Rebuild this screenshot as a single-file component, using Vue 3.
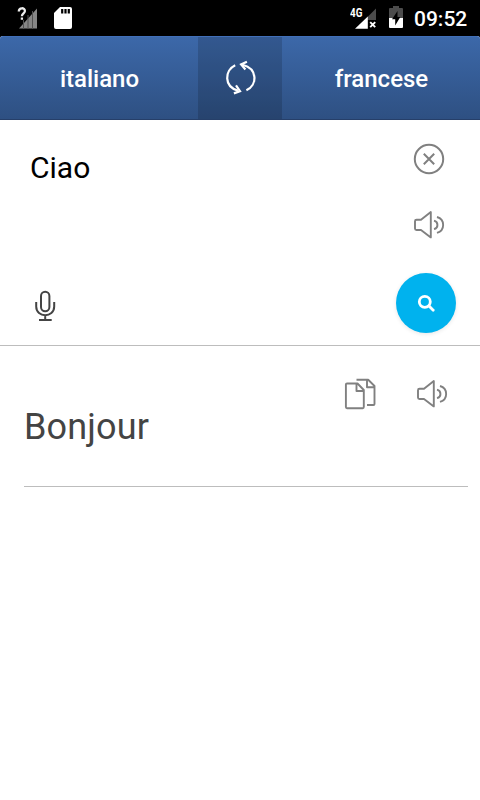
<script setup>
import { ref } from 'vue'

const source = ref('italiano')
const target = ref('francese')
const input = ref('Ciao')
const output = ref('Bonjour')

function swap() {
  const lang = source.value
  source.value = target.value
  target.value = lang
}
</script>

<template>
  <div class="screen">
    <header class="status">
      <svg class="signal" viewBox="17 6 22 24" width="22" height="24">
        <path d="M19 28.5L37 8.5V28.5Z" fill="#858585" />
        <path d="M23.5 20V29M28 15V29M32.5 11V29" stroke="#505050" stroke-width="1" />
        <path d="M18.5 10.8C18.8 7.2 25 7 25 10.8C25 13.3 21.9 13.4 21.9 16.4V20" fill="none" stroke="#000" stroke-width="4.6" />
        <path d="M18.8 11.4C18.8 7.4 24.9 7.2 24.9 11C24.9 13.3 21.9 13.4 21.9 16.2M21.9 17.4V19.8" fill="none" stroke="#ededed" stroke-width="2.3" />
      </svg>
      <svg class="sd" viewBox="54 7 18 22" width="18" height="22">
        <path d="M60 7H70Q72 7 72 9V27Q72 29 70 29H56Q54 29 54 27V13Z" fill="#fff" />
        <path d="M62.2 9V13.6M65.5 9V13.6M68.8 9V13.6" stroke="#000" stroke-width="2.2" />
      </svg>
      <span class="grow"></span>
      <span class="network">
        <svg viewBox="349 6 30 24" width="30" height="24">
          <path d="M367.5 17L376 8.5V20H367.5Z" fill="#4c4c4c" />
          <path d="M355 28.8L367.8 16.5V28.8Z" fill="#fff" />
          <path d="M370.2 22.2L375.2 27.2M375.2 22.2L370.2 27.2" stroke="#fff" stroke-width="1.9" />
        </svg>
        <span class="generation">4G</span>
      </span>
      <svg class="battery" viewBox="389 6 14 22" width="14" height="22">
        <path d="M389 9Q389 8 390 8H393V6H399V8H402Q403 8 403 9V18H389Z" fill="#4c4c4c" />
        <path d="M389 18H403V27Q403 28 402 28H390Q389 28 389 27Z" fill="#fff" />
        <path d="M397.5 11L392 19.3H395.2V25.5L400.3 17H397.5Z" fill="#000" />
      </svg>
      <time>09:52</time>
    </header>

    <nav class="languages">
      <button class="language">{{ source }}</button>
      <button class="swap" aria-label="Scambia" @click="swap">
        <svg viewBox="223 60 34 36" width="34" height="36">
          <g fill="none" stroke="#fff" stroke-width="2.2">
            <path d="M235.2 65.2C224.4 70.3 223.7 86.7 238 90.6" />
            <path d="M236 85.4L240 91.1L233.9 93.4" />
            <path d="M246.4 90.3C257.5 85.3 258 68.7 242.5 64.8" />
            <path d="M246.9 61.7L241.1 64.4L245.4 69.5" />
          </g>
        </svg>
      </button>
      <button class="language">{{ target }}</button>
    </nav>

    <main>
      <section class="source">
        <div class="entry">
          <p class="input">{{ input }}</p>
          <svg class="mic" viewBox="34 289 22 33" width="22" height="33">
            <g fill="none" stroke="#444" stroke-width="2">
              <rect x="41" y="291.7" width="8.4" height="19.6" rx="4.2" />
              <path d="M36.2 302V306.5C36.2 318 54.2 318 54.2 306.5V302M45.2 315V320M39 320H51.7" />
            </g>
          </svg>
        </div>
        <div class="actions">
          <svg class="clear" viewBox="413 143 32 32" width="32" height="32">
            <g fill="none" stroke="#808080" stroke-width="2">
              <circle cx="429" cy="159" r="14.2" />
              <path d="M423.8 153.8L434.2 164.2M434.2 153.8L423.8 164.2" />
            </g>
          </svg>
          <svg class="speaker" viewBox="413 210 32 30" width="32" height="30">
            <g fill="none" stroke="#808080" stroke-width="1.9" stroke-linejoin="round">
              <path d="M421 219.8L430.8 212V237.4L421 230H416.5Q415 230 415 228.5V221.3Q415 219.8 416.5 219.8Z" />
              <path d="M434 220.6C438.6 221.8 438.6 228 434 229.2M437 217C445.2 219.6 445.2 230.2 437 232.9" />
            </g>
          </svg>
          <button class="search" aria-label="Cerca">
            <svg viewBox="417 295 19 19" width="19" height="19">
              <g fill="none" stroke="#fff" stroke-width="2.8">
                <circle cx="424.8" cy="302.8" r="5.5" />
                <path d="M428.8 306.8L433.2 311.2" stroke-linecap="round" />
              </g>
            </svg>
          </button>
        </div>
      </section>

      <section class="result">
        <div class="tools">
          <svg viewBox="344 378 33 33" width="33" height="33">
            <g fill="none" stroke="#808080" stroke-width="1.9" stroke-linejoin="round">
              <path d="M356.5 379.8H368.2L374.5 386V404Q374.5 405 373.5 405H367M367 380V387.2H374" />
              <path d="M347 383.5H357.5L363.8 390V407Q363.8 408.2 362.8 408.2H347Q345.9 408.2 345.9 407V384.6Q345.9 383.5 347 383.5ZM356.5 384V391H363.5" />
            </g>
          </svg>
          <svg class="listen" viewBox="413 210 32 30" width="32" height="30">
            <g fill="none" stroke="#808080" stroke-width="1.9" stroke-linejoin="round">
              <path d="M421 219.8L430.8 212V237.4L421 230H416.5Q415 230 415 228.5V221.3Q415 219.8 416.5 219.8Z" />
              <path d="M434 220.6C438.6 221.8 438.6 228 434 229.2M437 217C445.2 219.6 445.2 230.2 437 232.9" />
            </g>
          </svg>
        </div>
        <p class="output">{{ output }}</p>
      </section>
    </main>
  </div>
</template>

<style>
body {
  background: #fff;
}
</style>

<style scoped>
.screen {
  width: 480px;
  height: 800px;
  overflow: hidden;
  background: #fff;
  font-family: Roboto, sans-serif;
}
svg {
  display: block;
  flex: none;
}
p {
  margin: 0;
}
button {
  border: 0;
  padding: 0;
  font-family: inherit;
}
.status {
  display: flex;
  align-items: flex-start;
  height: 36px;
  box-sizing: border-box;
  padding: 6px 12px 0 17px;
  background: #000;
  color: #fff;
}
.sd {
  margin: 1px 0 0 15px;
}
.grow {
  flex: 1;
}
.network {
  position: relative;
}
.generation {
  position: absolute;
  left: 1px;
  top: 1px;
  font-size: 12px;
  line-height: 12px;
  font-weight: 700;
  transform: scaleX(0.82);
  transform-origin: left;
}
.battery {
  margin-left: 10px;
}
time {
  width: 54px;
  margin-left: 11px;
  font-size: 21px;
  font-weight: 500;
  line-height: 26px;
  white-space: nowrap;
}
.languages {
  display: grid;
  grid-template-columns: 198px 84px 198px;
  height: 84px;
  box-sizing: border-box;
  border-top: 1px solid #416fb8;
  border-bottom: 1px solid #263f69;
  border-radius: 3px 3px 0 0;
  background: linear-gradient(#3c68a9, #2e5082);
  box-shadow: 0 -4px 0 #000;
}
.language {
  padding: 2px 0 0 1px;
  background: none;
  color: #fff;
  font-size: 24px;
  font-weight: 500;
  line-height: 28px;
}
.swap {
  display: flex;
  align-items: center;
  justify-content: center;
  background: rgba(0, 0, 0, 0.15);
}
.source {
  display: flex;
  justify-content: space-between;
  height: 226px;
  box-sizing: border-box;
  padding: 23px 24px 0 30px;
  border-bottom: 1px solid #bdbdbd;
}
.input {
  height: 146px;
  color: #000;
  font-size: 30px;
  line-height: 50px;
}
.mic {
  margin-left: 4px;
}
.actions {
  display: flex;
  flex-direction: column;
  align-items: flex-end;
}
.clear,
.speaker {
  margin-right: 11px;
}
.speaker {
  margin-top: 35px;
}
.search {
  display: flex;
  align-items: center;
  justify-content: center;
  width: 60px;
  height: 60px;
  margin-top: 33px;
  border-radius: 50%;
  background: #00b2ee;
  box-shadow: 0 1px 4px rgba(0, 0, 0, 0.1);
}
.result {
  height: 108px;
  margin: 32px 12px 0 24px;
  border-bottom: 1px solid #bdbdbd;
}
.tools {
  display: flex;
  justify-content: flex-end;
  gap: 39px;
  height: 28px;
  padding-right: 20px;
}
.listen {
  margin-top: 1px;
}
.output {
  color: #444;
  font-size: 36px;
  line-height: 42px;
  letter-spacing: 0.15px;
}
</style>
